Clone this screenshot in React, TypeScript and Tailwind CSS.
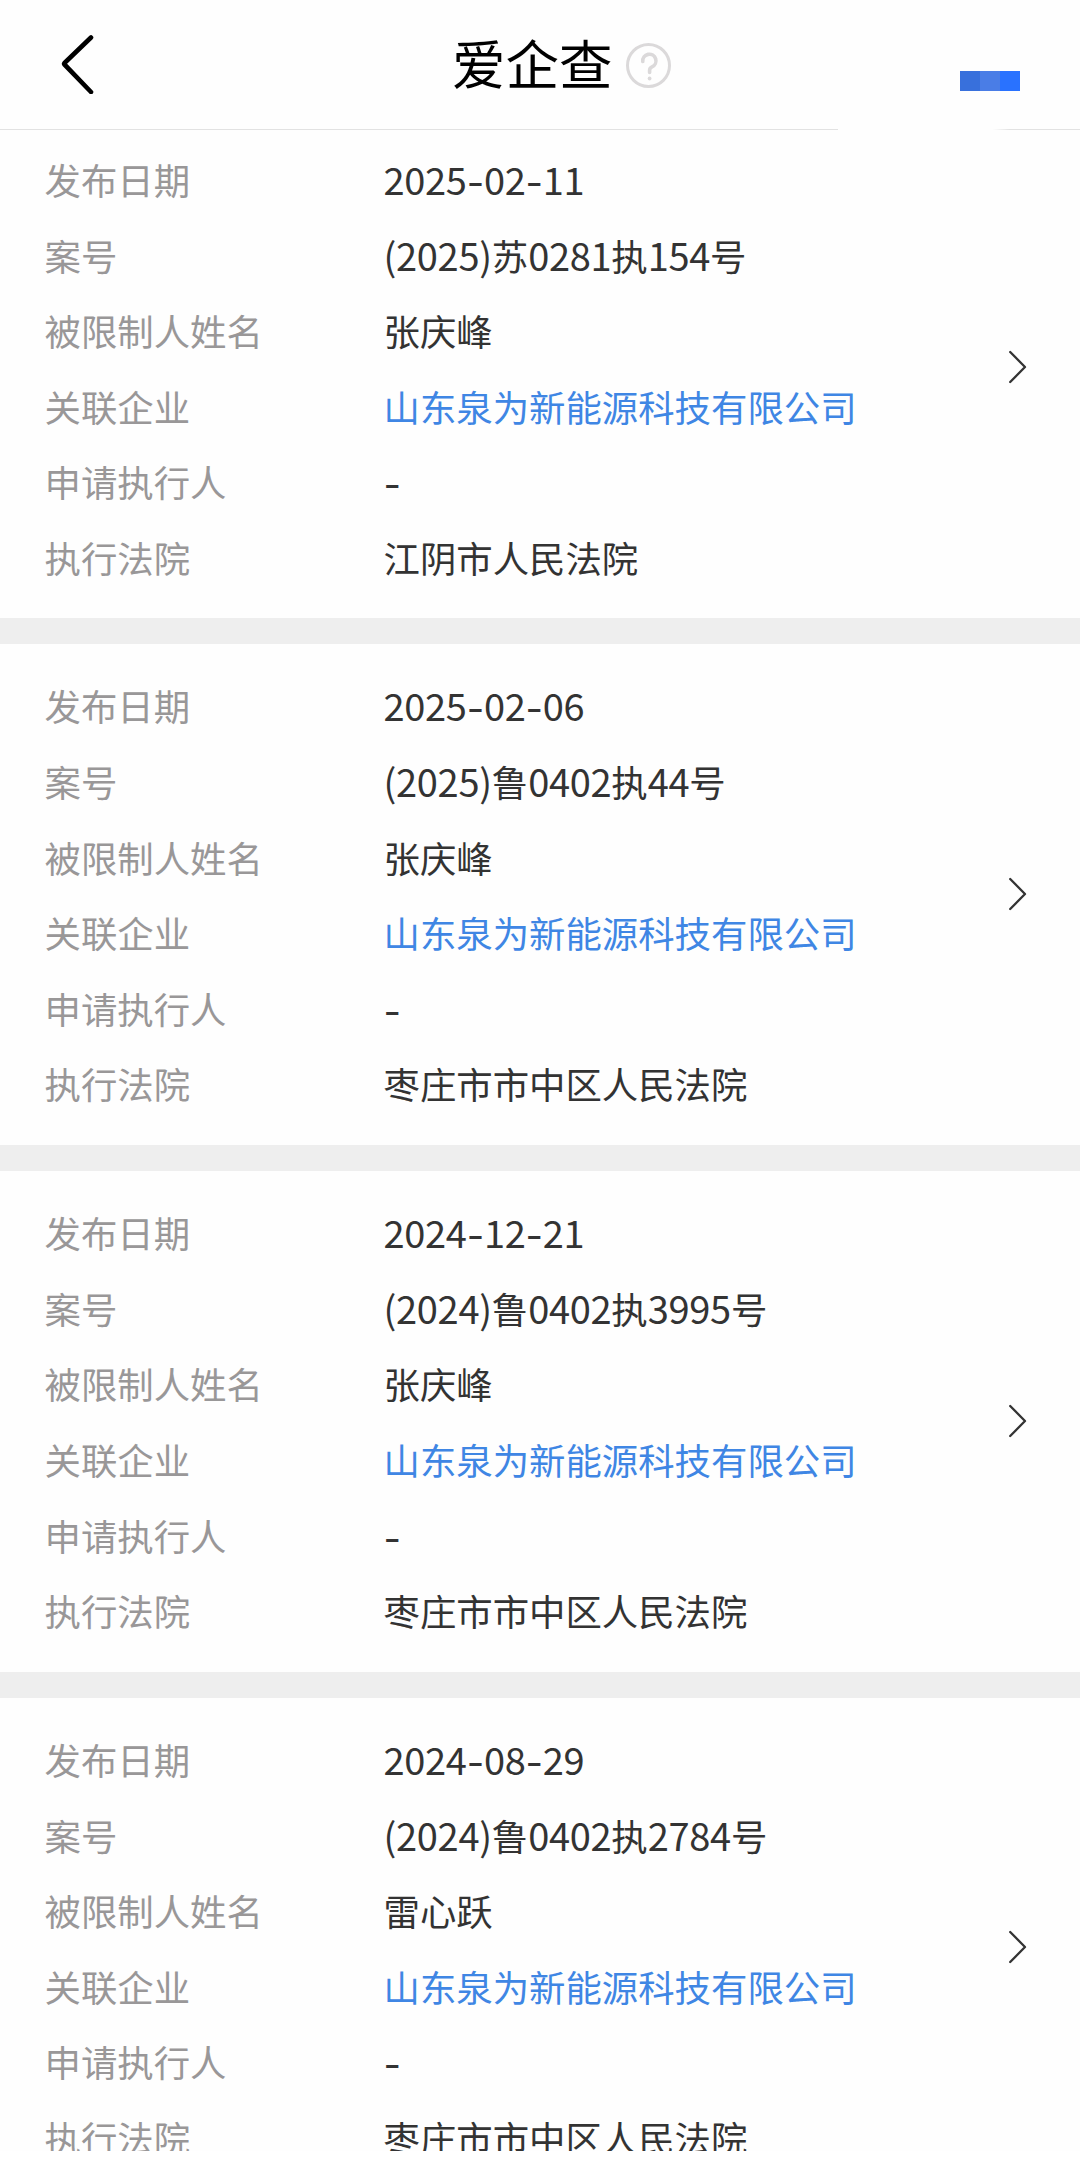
import clsx from "clsx";

type CaseRecord = {
  date: string;
  caseNo: string;
  person: string;
  company: string;
  applicant: string;
  court: string;
};

const company = "山东泉为新能源科技有限公司";

const records: CaseRecord[] = [
  { date: "2025-02-11", caseNo: "(2025)苏0281执154号", person: "张庆峰", company, applicant: "-", court: "江阴市人民法院" },
  { date: "2025-02-06", caseNo: "(2025)鲁0402执44号", person: "张庆峰", company, applicant: "-", court: "枣庄市市中区人民法院" },
  { date: "2024-12-21", caseNo: "(2024)鲁0402执3995号", person: "张庆峰", company, applicant: "-", court: "枣庄市市中区人民法院" },
  { date: "2024-08-29", caseNo: "(2024)鲁0402执2784号", person: "雷心跃", company, applicant: "-", court: "枣庄市市中区人民法院" },
];

// latin digits are set slightly larger than the Chinese text
const Value = ({ text }: { text: string }) => (
  <>
    {text.split(/([0-9()]+|-)/).filter(Boolean).map((part, i) => {
      if (part === "-") {
        return (
          <span key={i} className="relative top-px font-['Inter',sans-serif] text-[38px] tracking-[-0.2px]">
            {part}
          </span>
        );
      }
      return (
        <span key={i} className={clsx(/[0-9]/.test(part) && "text-[38px] tracking-[-0.3px]")}>
          {part}
        </span>
      );
    })}
  </>
);

const Row = ({ label, value, link }: { label: string; value: string; link?: boolean }) => (
  <div className="flex h-[75.6px] items-center whitespace-nowrap text-[36.4px] leading-[52px]">
    <div className="w-[339px] shrink-0 text-[#999798]">{label}</div>
    <div className={clsx("h-[52px]", link ? "text-[#3f86e4]" : "text-[#333333]")}>
      <Value text={value} />
    </div>
  </div>
);

const RecordCard = ({ record, first }: { record: CaseRecord; first: boolean }) => (
  <section
    className={clsx(
      "flex shrink-0 items-center justify-between border-b-[26px] border-[#eeeeee] pl-[44.5px] pr-[52px]",
      first ? "h-[514px]" : "h-[526.8px]"
    )}
  >
    <div className={clsx(first && "-mt-[12px]")}>
      <Row label="发布日期" value={record.date} />
      <Row label="案号" value={record.caseNo} />
      <Row label="被限制人姓名" value={record.person} />
      <Row label="关联企业" value={record.company} link />
      <Row label="申请执行人" value={record.applicant} />
      <Row label="执行法院" value={record.court} />
    </div>
    <svg
      className={clsx("h-[34px] w-5 shrink-0", first ? "-mt-[14px]" : "-mt-px")}
      viewBox="0 0 20 34"
      fill="none"
      stroke="#333333"
      strokeWidth="2.3"
      strokeLinecap="round"
      strokeLinejoin="round"
    >
      <path d="M2.2 2 17 17 2.2 32" />
    </svg>
  </section>
);

const Header = () => (
  <header className="h-[130px] shrink-0">
    <div className="flex h-[129px] items-start">
      <svg
        className="ml-[60px] mt-[34px] h-[60px] w-9"
        viewBox="0 0 36 60"
        fill="none"
        stroke="#000000"
        strokeWidth="4.6"
        strokeLinecap="round"
        strokeLinejoin="round"
      >
        <path d="M31 3.5 4.5 29 Q3.8 29.8 4.5 30.5 L31 58" />
      </svg>
      <h1 className="ml-[356px] mt-[22px] w-[174px] whitespace-nowrap text-[53.5px] leading-[80px] text-black">
        爱企查
      </h1>
      <svg
        className="mt-[42px] h-[46px] w-[46px]"
        viewBox="0 0 46 46"
        fill="none"
        stroke="#dbd9da"
        strokeWidth="3"
        strokeLinecap="round"
      >
        <circle cx="22.5" cy="23.5" r="21" />
        <path d="M16.8 19.5a6.6 6.6 0 1 1 9.2 5.4c-1.7.8-2.4 1.8-2.4 3.4v2.2" strokeWidth="3.6" />
        <circle cx="23.6" cy="36.5" r="1.9" fill="#dbd9da" stroke="none" />
      </svg>
      <div className="ml-[288px] mt-[71px] flex h-5">
        <div className="w-5 bg-[#3870dc]" />
        <div className="w-5 bg-[#4a7de6]" />
        <div className="w-5 bg-[#2972ff]" />
      </div>
    </div>
    <div className="flex h-px justify-between">
      <div className="w-[838px] bg-[#e2e2e2]" />
      <div className="w-[88px] bg-linear-to-r from-white to-[#e2e2e2] to-20%" />
    </div>
  </header>
);

const App = () => {
  return (
    <div className="h-[2169px] w-[1080px] bg-white pb-[18px] font-['Noto_Sans_CJK_SC',sans-serif]">
      {/* the list is cut off above the bottom safe area */}
      <div className="flex h-[2151px] flex-col overflow-hidden bg-[#fefefe]">
        <Header />
        {records.map((record, i) => (
          <RecordCard key={record.date} record={record} first={i === 0} />
        ))}
      </div>
    </div>
  );
};

export default App;
